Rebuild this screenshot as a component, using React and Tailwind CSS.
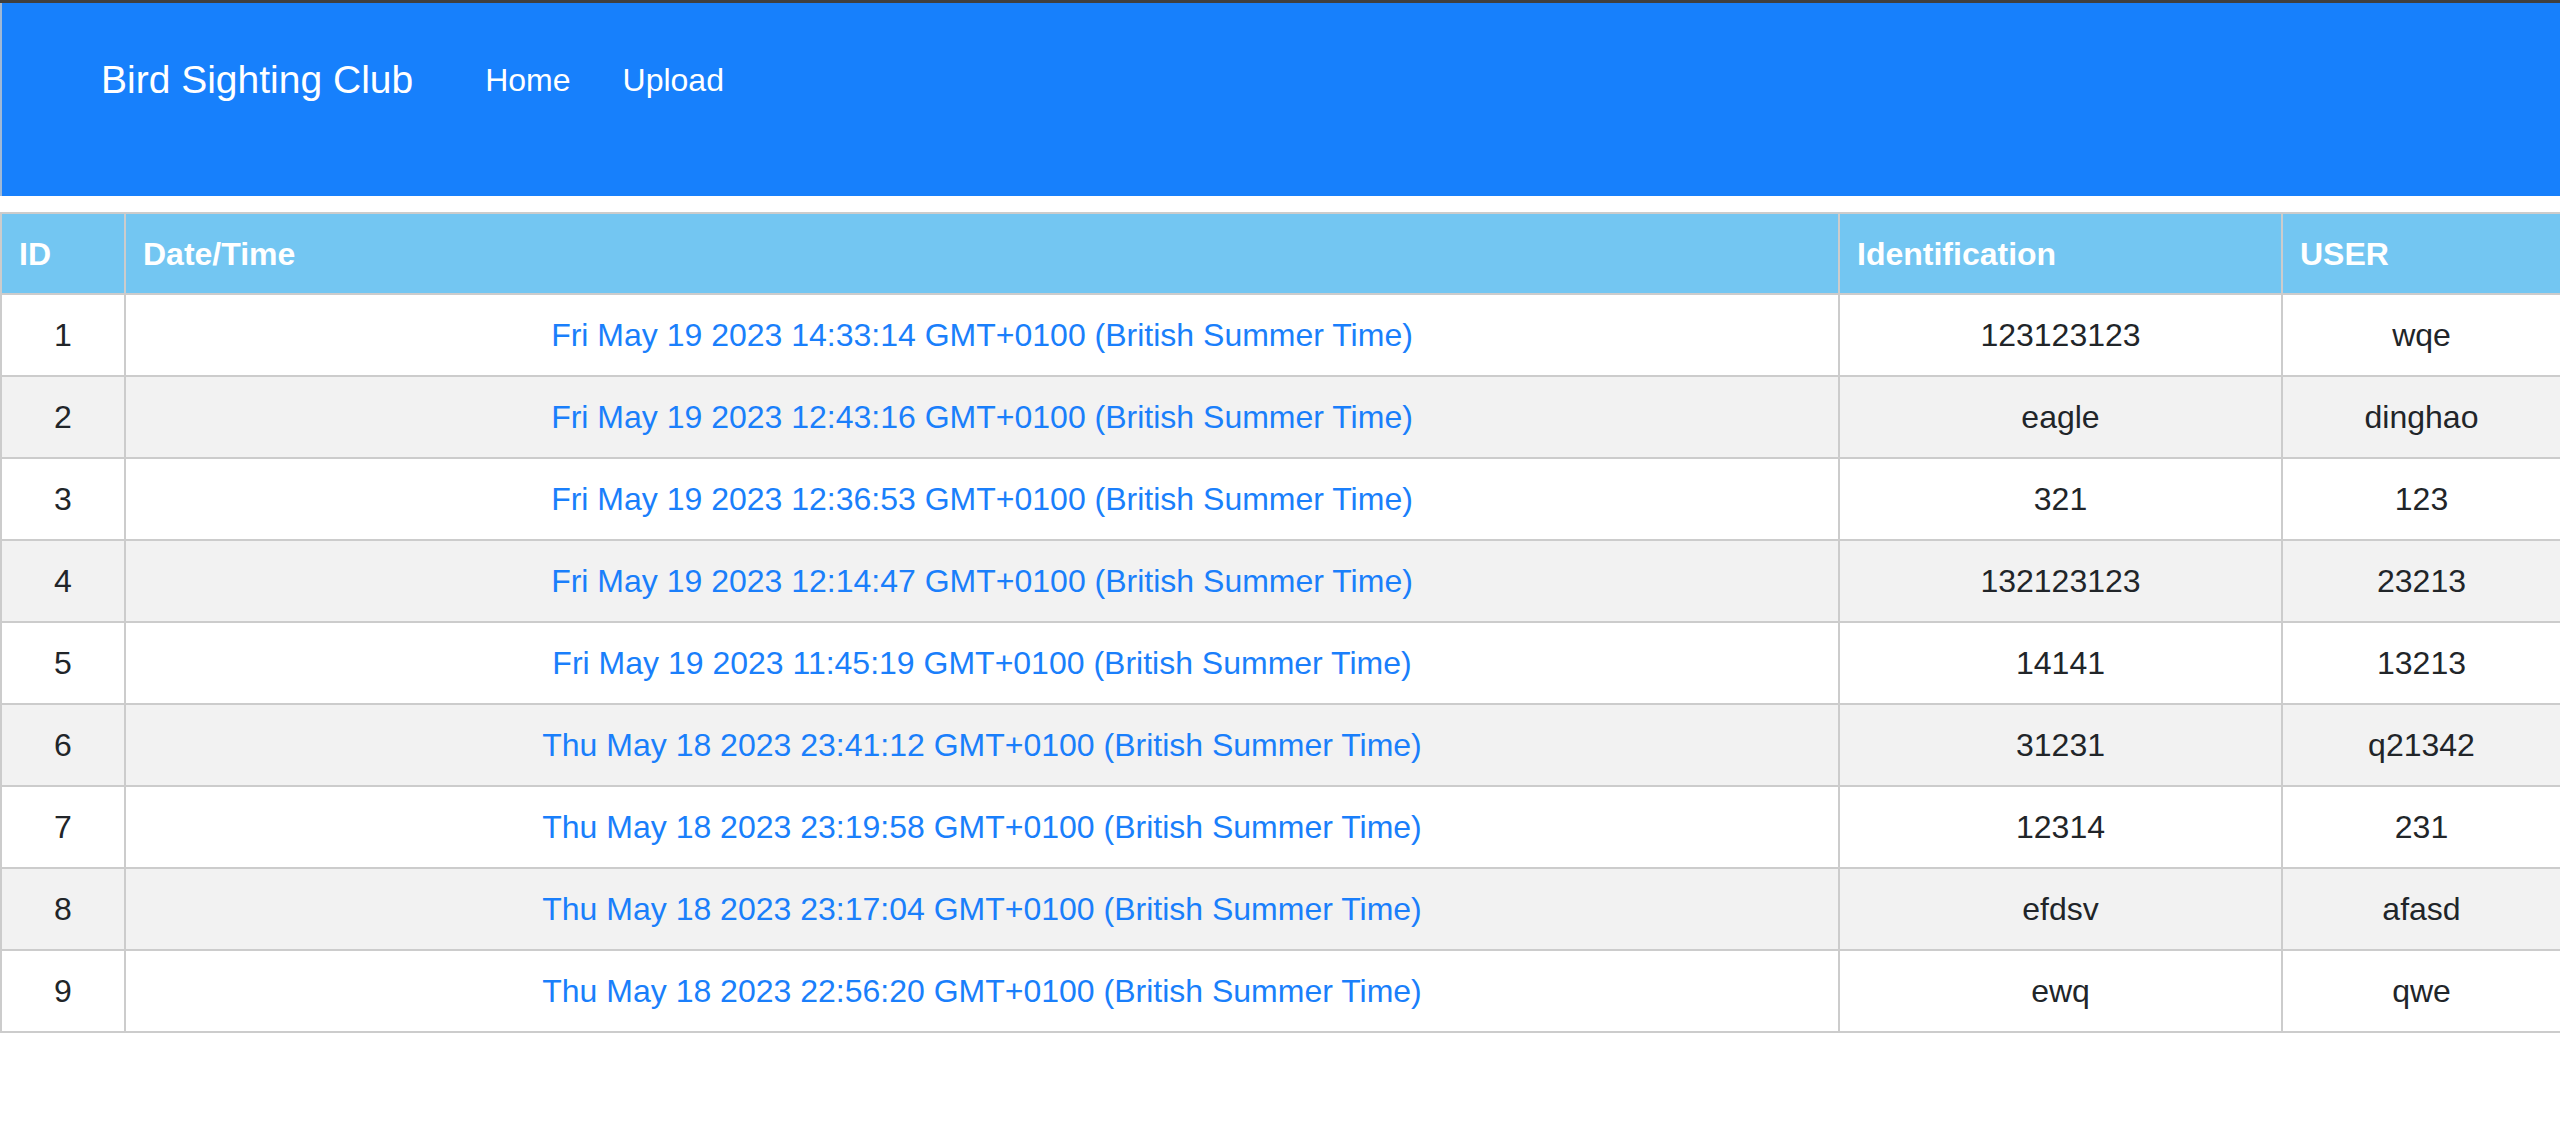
import React from "react";

const rows = [
  [1, "Fri May 19 2023 14:33:14 GMT+0100 (British Summer Time)", "123123123", "wqe"],
  [2, "Fri May 19 2023 12:43:16 GMT+0100 (British Summer Time)", "eagle", "dinghao"],
  [3, "Fri May 19 2023 12:36:53 GMT+0100 (British Summer Time)", "321", "123"],
  [4, "Fri May 19 2023 12:14:47 GMT+0100 (British Summer Time)", "132123123", "23213"],
  [5, "Fri May 19 2023 11:45:19 GMT+0100 (British Summer Time)", "14141", "13213"],
  [6, "Thu May 18 2023 23:41:12 GMT+0100 (British Summer Time)", "31231", "q21342"],
  [7, "Thu May 18 2023 23:19:58 GMT+0100 (British Summer Time)", "12314", "231"],
  [8, "Thu May 18 2023 23:17:04 GMT+0100 (British Summer Time)", "efdsv", "afasd"],
  [9, "Thu May 18 2023 22:56:20 GMT+0100 (British Summer Time)", "ewq", "qwe"],
];

export default function App() {
  return (
    <div className="w-[2560px] min-h-[1142px] bg-white font-['Liberation_Sans',Arial,sans-serif] text-[#212529]">
      <div className="h-[3px] bg-[#3f3f3f]" />
      <nav className="h-[193px] bg-[#1780fc] border-l-2 border-[#9fb8d6] flex items-start pt-[47px] pl-[99px] text-white">
        <span className="text-[39px] leading-[60px]">Bird Sighting Club</span>
        <a className="ml-[72px] text-[32px] leading-[60px]">Home</a>
        <a className="ml-[52px] text-[32px] leading-[60px]">Upload</a>
      </nav>
      <div className="h-[16px]" />
      <table className="w-[2560px] border-collapse border-2 border-[#cccccc] text-[32px] table-fixed">
        <colgroup>
          <col className="w-[124px]" />
          <col className="w-[1714px]" />
          <col className="w-[443px]" />
          <col className="w-[279px]" />
        </colgroup>
        <thead>
          <tr className="bg-[#73c6f2] text-white h-[81px]">
            <th className="border-2 border-[#cccccc] text-left font-bold pl-[17px]">ID</th>
            <th className="border-2 border-[#cccccc] text-left font-bold pl-[17px]">Date/Time</th>
            <th className="border-2 border-[#cccccc] text-left font-bold pl-[17px]">Identification</th>
            <th className="border-2 border-[#cccccc] text-left font-bold pl-[17px]">USER</th>
          </tr>
        </thead>
        <tbody>
          {rows.map((r, i) => (
            <tr key={r[0]} className={`h-[82px] ${i % 2 === 1 ? "bg-[#f2f2f2]" : "bg-white"}`}>
              <td className="border-2 border-[#cccccc] text-center">{r[0]}</td>
              <td className="border-2 border-[#cccccc] text-center text-[#1a7ffb]">{r[1]}</td>
              <td className="border-2 border-[#cccccc] text-center">{r[2]}</td>
              <td className="border-2 border-[#cccccc] text-center">{r[3]}</td>
            </tr>
          ))}
        </tbody>
      </table>
    </div>
  );
}
